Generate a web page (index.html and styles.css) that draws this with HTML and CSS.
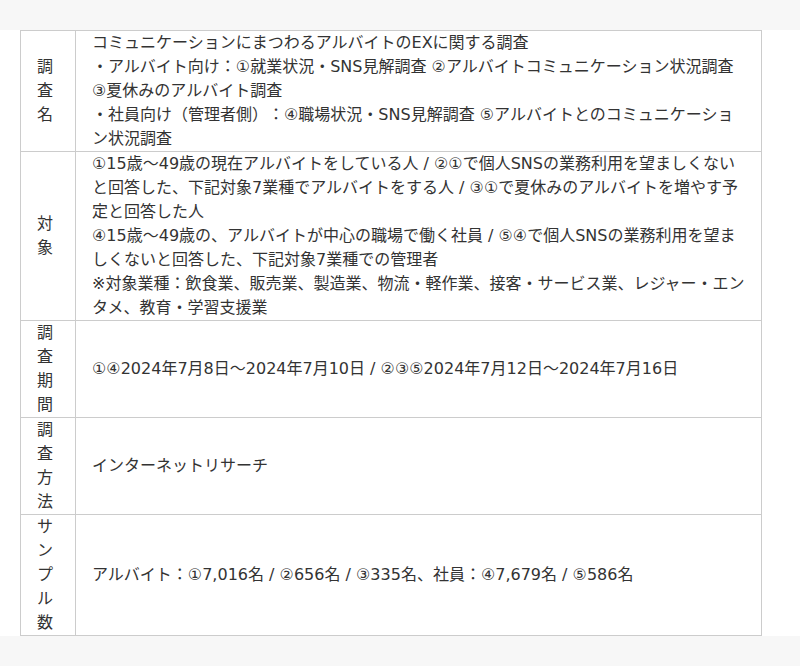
FILE: index.html
```html
<html>
<head>
<title>調査概要</title>
<meta http-equiv="Content-Type" content="text/html; charset=UTF-8" />
<link rel="stylesheet" href="styles.css">
</head>
<body>

<div class="Page">
  <div class="Sheet">
    <table class="Outline">
      <tr>
        <th>調査名</th>
        <td>コミュニケーションにまつわるアルバイトのEXに関する調査<br>・アルバイト向け：①就業状況・SNS見解調査 ②アルバイトコミュニケーション状況調査 ③夏休みのアルバイト調査<br>・社員向け（管理者側）：④職場状況・SNS見解調査 ⑤アルバイトとのコミュニケーション状況調査</td>
      </tr>
      <tr>
        <th>対象</th>
        <td>①15歳～49歳の現在アルバイトをしている人 / ②①で個人SNSの業務利用を望ましくないと回答した、下記対象7業種でアルバイトをする人 / ③①で夏休みのアルバイトを増やす予定と回答した人<br>④15歳～49歳の、アルバイトが中心の職場で働く社員 / ⑤④で個人SNSの業務利用を望ましくないと回答した、下記対象7業種での管理者<br>※対象業種：飲食業、販売業、製造業、物流・軽作業、接客・サービス業、レジャー・エンタメ、教育・学習支援業</td>
      </tr>
      <tr>
        <th>調査期間</th>
        <td>①④2024年7月8日～2024年7月10日 / ②③⑤2024年7月12日～2024年7月16日</td>
      </tr>
      <tr>
        <th>調査方法</th>
        <td>インターネットリサーチ</td>
      </tr>
      <tr>
        <th>サンプル数</th>
        <td>アルバイト：①7,016名 / ②656名 / ③335名、社員：④7,679名 / ⑤586名</td>
      </tr>
    </table>
  </div>
</div>

</body>
</html>
```

FILE: styles.css
```css
body{
   margin:0;
   background:#f7f7f7;
   font-family:"DejaVu Sans","Noto Sans CJK JP",sans-serif;
   font-size:16px;
   color:#333;
   text-spacing-trim:space-all;
}
.Page{
   padding:30px 0;
}
.Sheet{
   background:#fff;
   padding:0 38px 0 20px;
}
.Outline{
   width:742px;
   border-collapse:collapse;
   line-height:24px;
}
.Outline th,.Outline td{
   border:1px solid #ccc;
   padding:0 16px;
   vertical-align:middle;
}
.Outline th{
   width:22px;
   padding:0 19px 0 13px;
   font-weight:normal;
   text-align:center;
}
.Outline td{
   text-align:left;
}
```
